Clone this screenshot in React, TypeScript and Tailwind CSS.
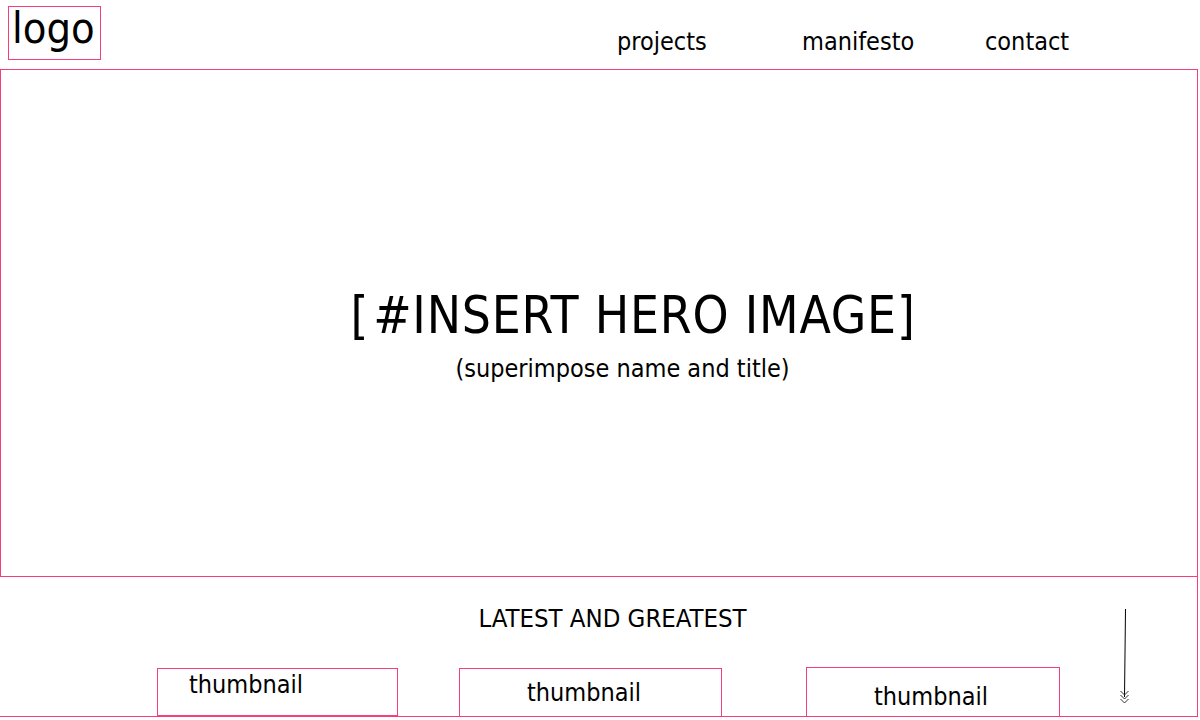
import React from "react";

const pink = "border-[#f73d7a]";

export default function App() {
  return (
    <div className="w-[1200px] h-[720px] bg-white overflow-hidden flex flex-col text-black font-['DejaVu_Sans_Condensed','DejaVu_Sans',sans-serif]">
      {/* header */}
      <header className="h-[69px] flex items-start shrink-0">
        <div className={`ml-[8px] mt-[6px] w-[93px] h-[54px] border ${pink} pl-[3px]`}>
          <span className="block text-[43px] leading-none">logo</span>
        </div>
        <nav className="flex ml-[516px] mt-[29px] text-[25px] leading-none">
          <a className="w-[185px]">projects</a>
          <a className="w-[183px]">manifesto</a>
          <a>contact</a>
        </nav>
      </header>

      {/* hero */}
      <section className={`w-[1198px] h-[508px] shrink-0 border ${pink} flex flex-col items-center pt-[220px]`}>
        <div className="ml-[68px] text-[51px] leading-none tracking-[0.8px]">
          <span className="mr-[4px]">[</span>#INSERT HERO IMAGE]
        </div>
        <div className="ml-[47px] mt-[15px] text-[25px] leading-none">(superimpose name and title)</div>
      </section>

      {/* bottom */}
      <section className={`w-[1198px] h-[140px] shrink-0 border-r border-b ${pink} flex`}>
        <div className="w-[1119px] flex flex-col">
          <div className="pl-[106px] pt-[28px] text-center text-[25.5px] leading-[26px]">LATEST AND GREATEST</div>
          <div className="flex items-start pl-[157px] mt-[36px] text-[25px] leading-none">
            <div className={`mt-[1px] w-[241px] h-[48px] border ${pink} pl-[31px] pt-[3px]`}>thumbnail</div>
            <div className={`ml-[61px] mt-[1px] w-[263px] h-[49px] border ${pink} pl-[67px] pt-[11px]`}>thumbnail</div>
            <div className={`ml-[84px] w-[254px] h-[50px] border ${pink} pl-[67px] pt-[16px]`}>thumbnail</div>
          </div>
        </div>
        <div className="w-[12px] pt-[32px]">
          <svg width="12" height="95" viewBox="0 0 12 95" fill="none" stroke="black" strokeWidth="1">
            <line x1="6.5" y1="0" x2="5.5" y2="88" />
            <polyline points="1.5,82 5.5,86 9.5,82" stroke="#333" />
            <polyline points="1.5,86 5.5,90 9.5,86" stroke="#333" />
            <polyline points="1.5,90 5.5,94 9.5,90" stroke="#333" />
          </svg>
        </div>
      </section>
    </div>
  );
}
